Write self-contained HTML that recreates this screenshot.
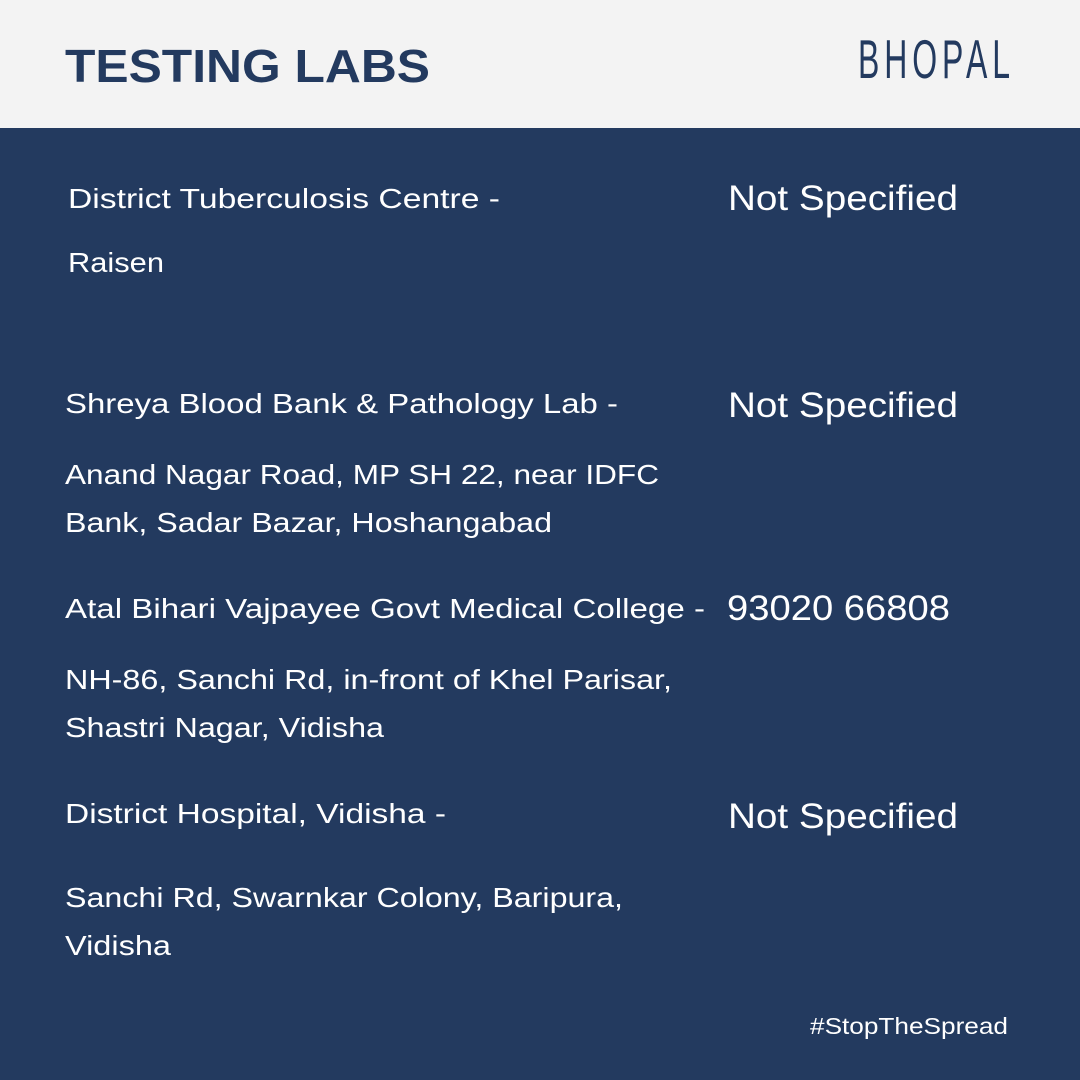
<!DOCTYPE html>
<html><head><meta charset="utf-8"><style>
html,body{margin:0;padding:0;width:1080px;height:1080px;overflow:hidden;background:#233a5f}
svg{display:block}
</style></head><body>
<svg width="1080" height="1080" viewBox="0 0 1080 1080" xmlns="http://www.w3.org/2000/svg">
<rect x="0" y="0" width="1080" height="1080" fill="#233a5f"/>
<rect x="0" y="0" width="1080" height="128" fill="#f3f3f3"/>
<g font-family="Liberation Sans, sans-serif">
<text x="65" y="82" font-size="46" font-weight="bold" fill="#233a5f" textLength="365" lengthAdjust="spacingAndGlyphs">TESTING LABS</text>
<g transform="translate(858,78) scale(1,1.7)">
<text x="0" y="0" font-size="32" fill="#233a5f" textLength="152" lengthAdjust="spacing">BHOPAL</text>
</g>
<g fill="#ffffff">
<g font-size="28">
<text x="68" y="208" textLength="432" lengthAdjust="spacingAndGlyphs">District Tuberculosis Centre -</text>
<text x="68" y="272" textLength="96" lengthAdjust="spacingAndGlyphs">Raisen</text>
<text x="65" y="413" textLength="553" lengthAdjust="spacingAndGlyphs">Shreya Blood Bank &amp; Pathology Lab -</text>
<text x="65" y="484" textLength="594" lengthAdjust="spacingAndGlyphs">Anand Nagar Road, MP SH 22, near IDFC</text>
<text x="65" y="532" textLength="487" lengthAdjust="spacingAndGlyphs">Bank, Sadar Bazar, Hoshangabad</text>
<text x="65" y="618" textLength="640" lengthAdjust="spacingAndGlyphs">Atal Bihari Vajpayee Govt Medical College -</text>
<text x="65" y="689" textLength="607" lengthAdjust="spacingAndGlyphs">NH-86, Sanchi Rd, in-front of Khel Parisar,</text>
<text x="65" y="737" textLength="319" lengthAdjust="spacingAndGlyphs">Shastri Nagar, Vidisha</text>
<text x="65" y="823" textLength="381" lengthAdjust="spacingAndGlyphs">District Hospital, Vidisha -</text>
<text x="65" y="907" textLength="558" lengthAdjust="spacingAndGlyphs">Sanchi Rd, Swarnkar Colony, Baripura,</text>
<text x="65" y="955" textLength="106" lengthAdjust="spacingAndGlyphs">Vidisha</text>
</g>
<g font-size="35">
<text x="728" y="210" textLength="230" lengthAdjust="spacingAndGlyphs">Not Specified</text>
<text x="728" y="417" textLength="230" lengthAdjust="spacingAndGlyphs">Not Specified</text>
<text x="727" y="620" textLength="223" lengthAdjust="spacingAndGlyphs">93020 66808</text>
<text x="728" y="828" textLength="230" lengthAdjust="spacingAndGlyphs">Not Specified</text>
</g>
<text x="810" y="1034" font-size="23" textLength="198" lengthAdjust="spacingAndGlyphs">#StopTheSpread</text>
</g>
</g>
</svg>
</body></html>
